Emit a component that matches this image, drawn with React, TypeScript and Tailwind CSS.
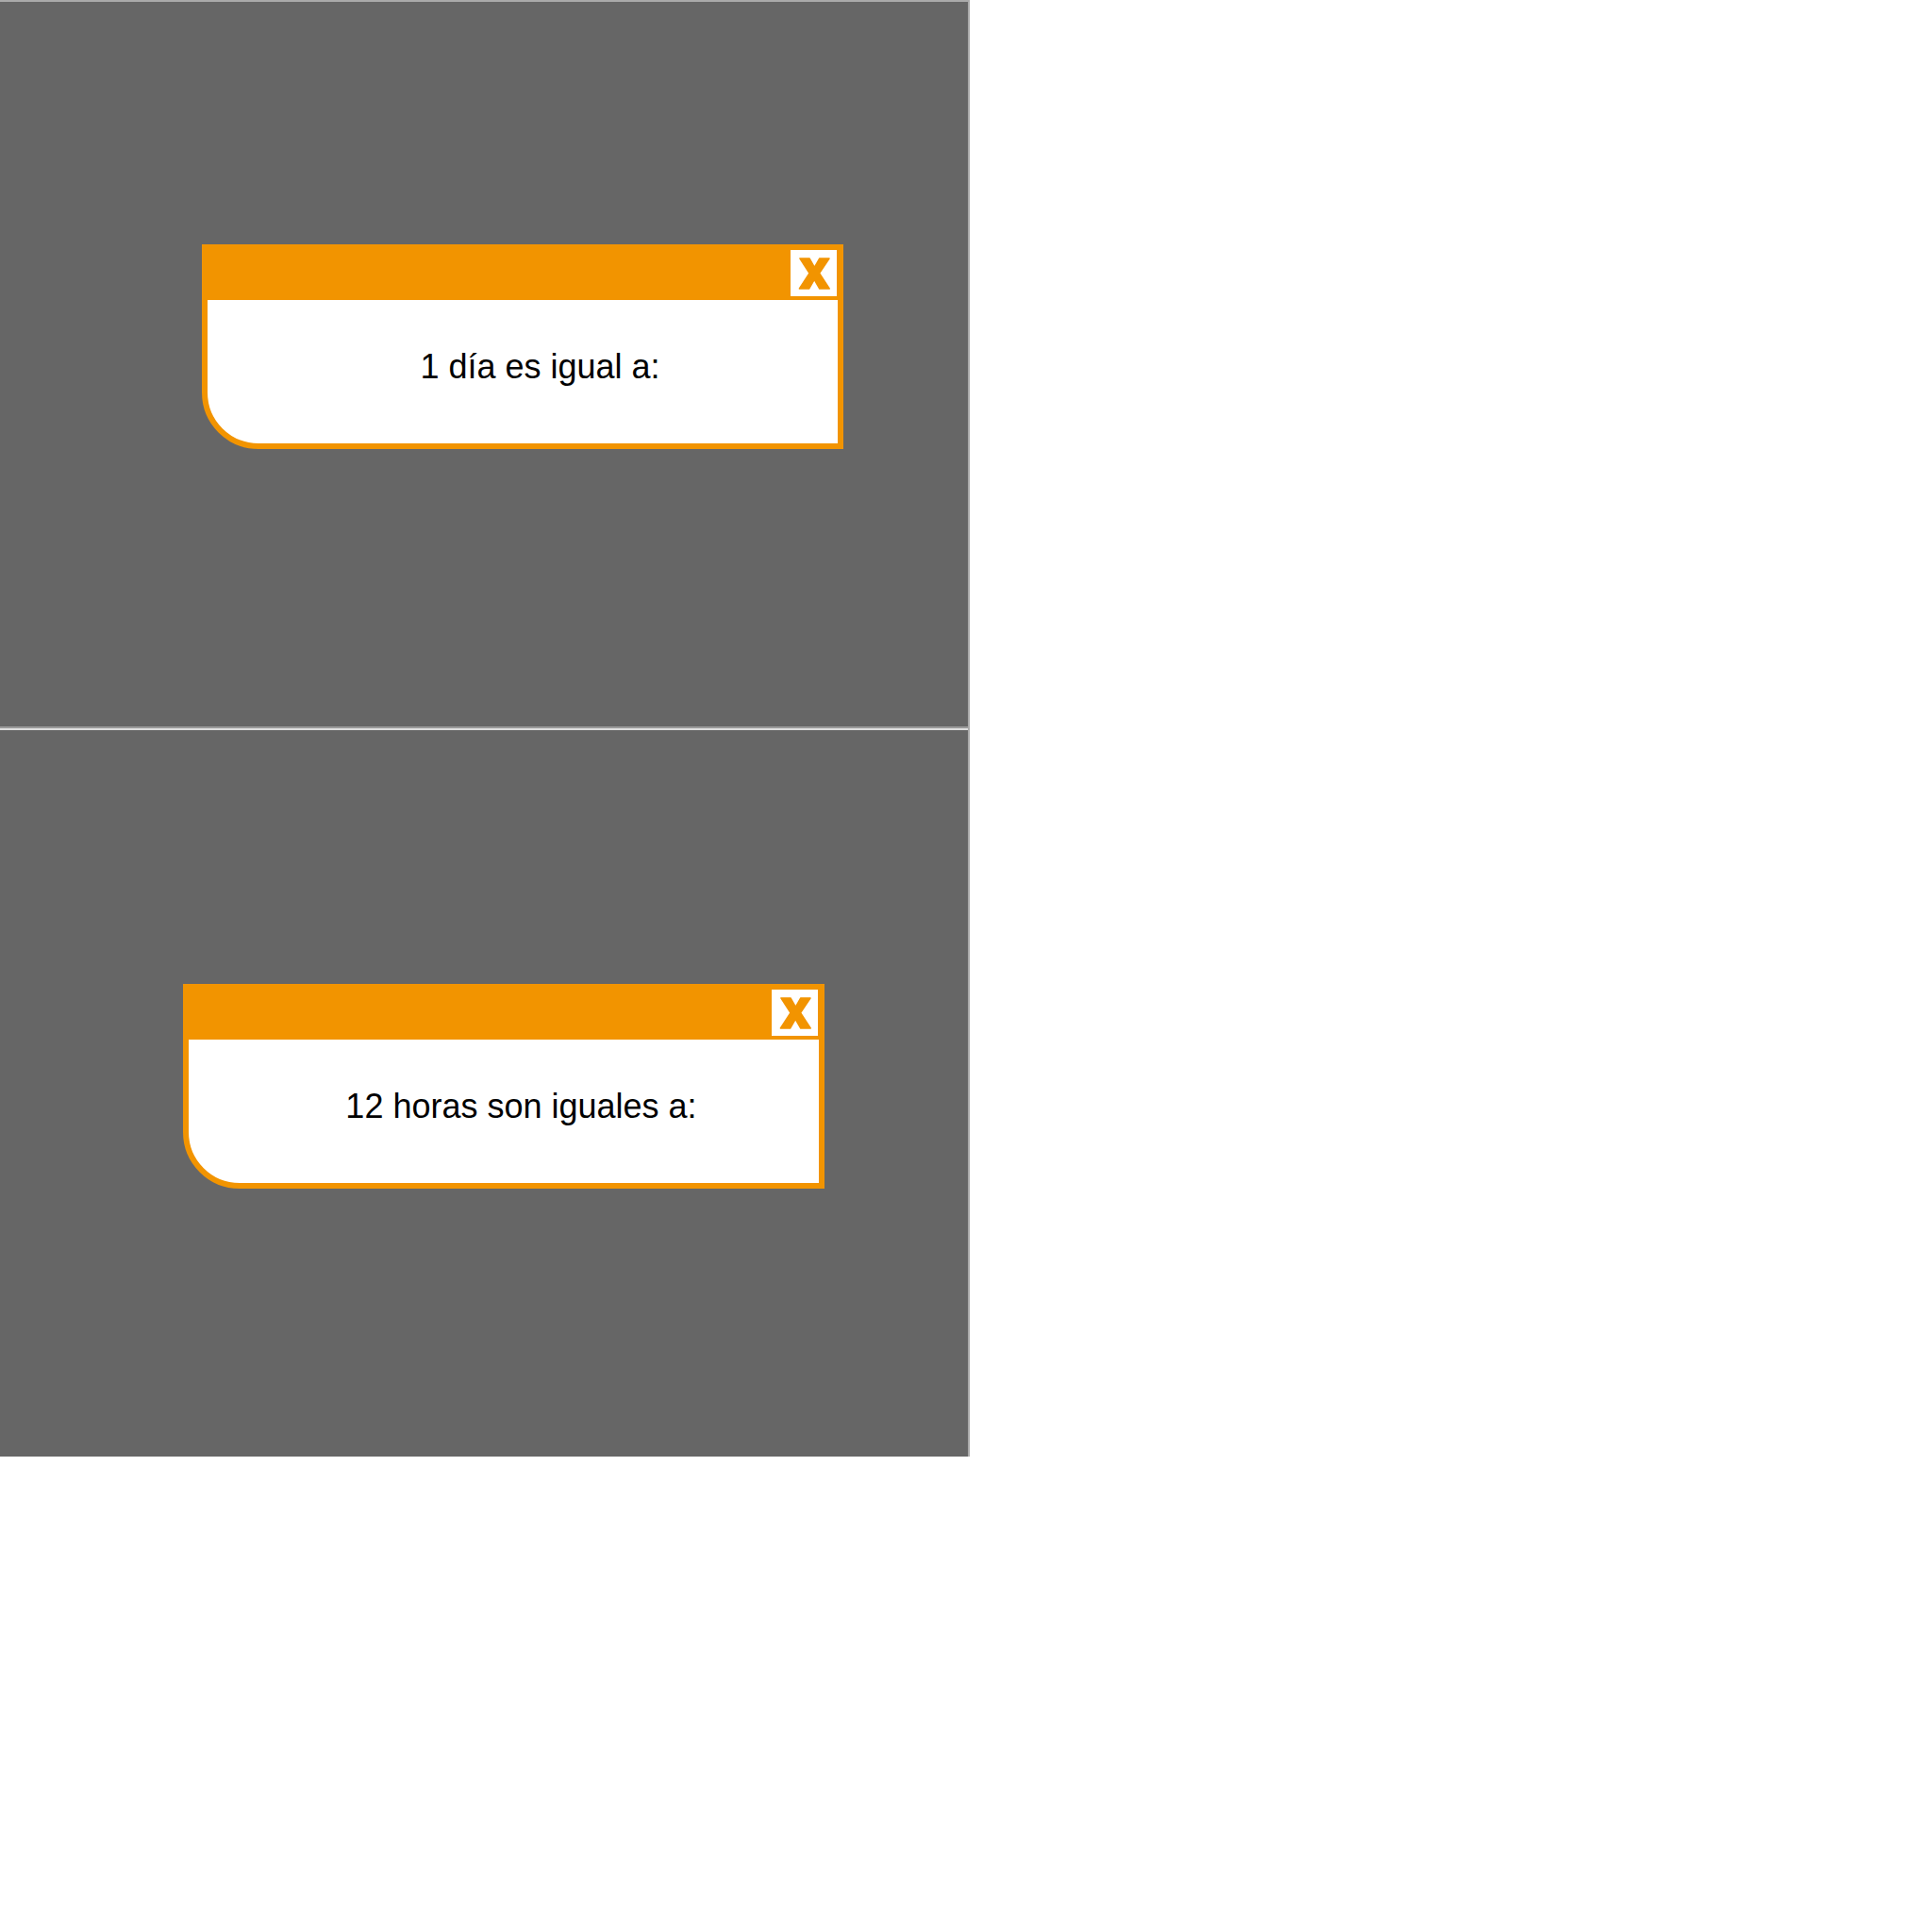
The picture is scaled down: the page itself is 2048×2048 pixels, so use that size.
function CloseButton() {
  return (
    <button
      type="button"
      aria-label="Cerrar"
      className="flex size-[49px] items-center justify-center bg-white text-[#f29400]"
    >
      <svg viewBox="0 0 34 34" className="size-[34px]" fill="currentColor" stroke="currentColor" strokeWidth="1.5" strokeLinejoin="round" aria-hidden="true">
        <path d="M2 1H12L17.4 10.3L22.8 1H33L22.6 16.6L33.2 33H22.8L17.2 23.4L11.6 33H1.4L12 16.6Z" />
      </svg>
    </button>
  );
}

function QuestionWindow({ text }: { text: string }) {
  return (
    <article className="overflow-hidden rounded-bl-[60px] border-6 border-[#f29400] bg-white">
      <header className="flex justify-end bg-[#f29400] pr-px pb-1">
        <CloseButton />
      </header>
      <p className="pt-[50px] pb-[60px] pl-[37px] text-center text-[36px] leading-[42px] text-black">{text}</p>
    </article>
  );
}

export default function App() {
  return (
    <main className="min-h-screen bg-white font-['Liberation_Sans',Arial,sans-serif]">
      <div className="max-w-[1028px] border-t-2 border-r-2 border-[#aaaaaa]">
        <section className="border-b-2 border-[#999999] bg-[#666666] pt-[257px] pr-[132px] pb-[294px] pl-[214px]">
          <QuestionWindow text="1 día es igual a:" />
        </section>
        <section className="border-t-2 border-[#dddddd] bg-[#666666] pt-[269px] pr-[152px] pb-[284px] pl-[194px]">
          <QuestionWindow text="12 horas son iguales a:" />
        </section>
      </div>
    </main>
  );
}
